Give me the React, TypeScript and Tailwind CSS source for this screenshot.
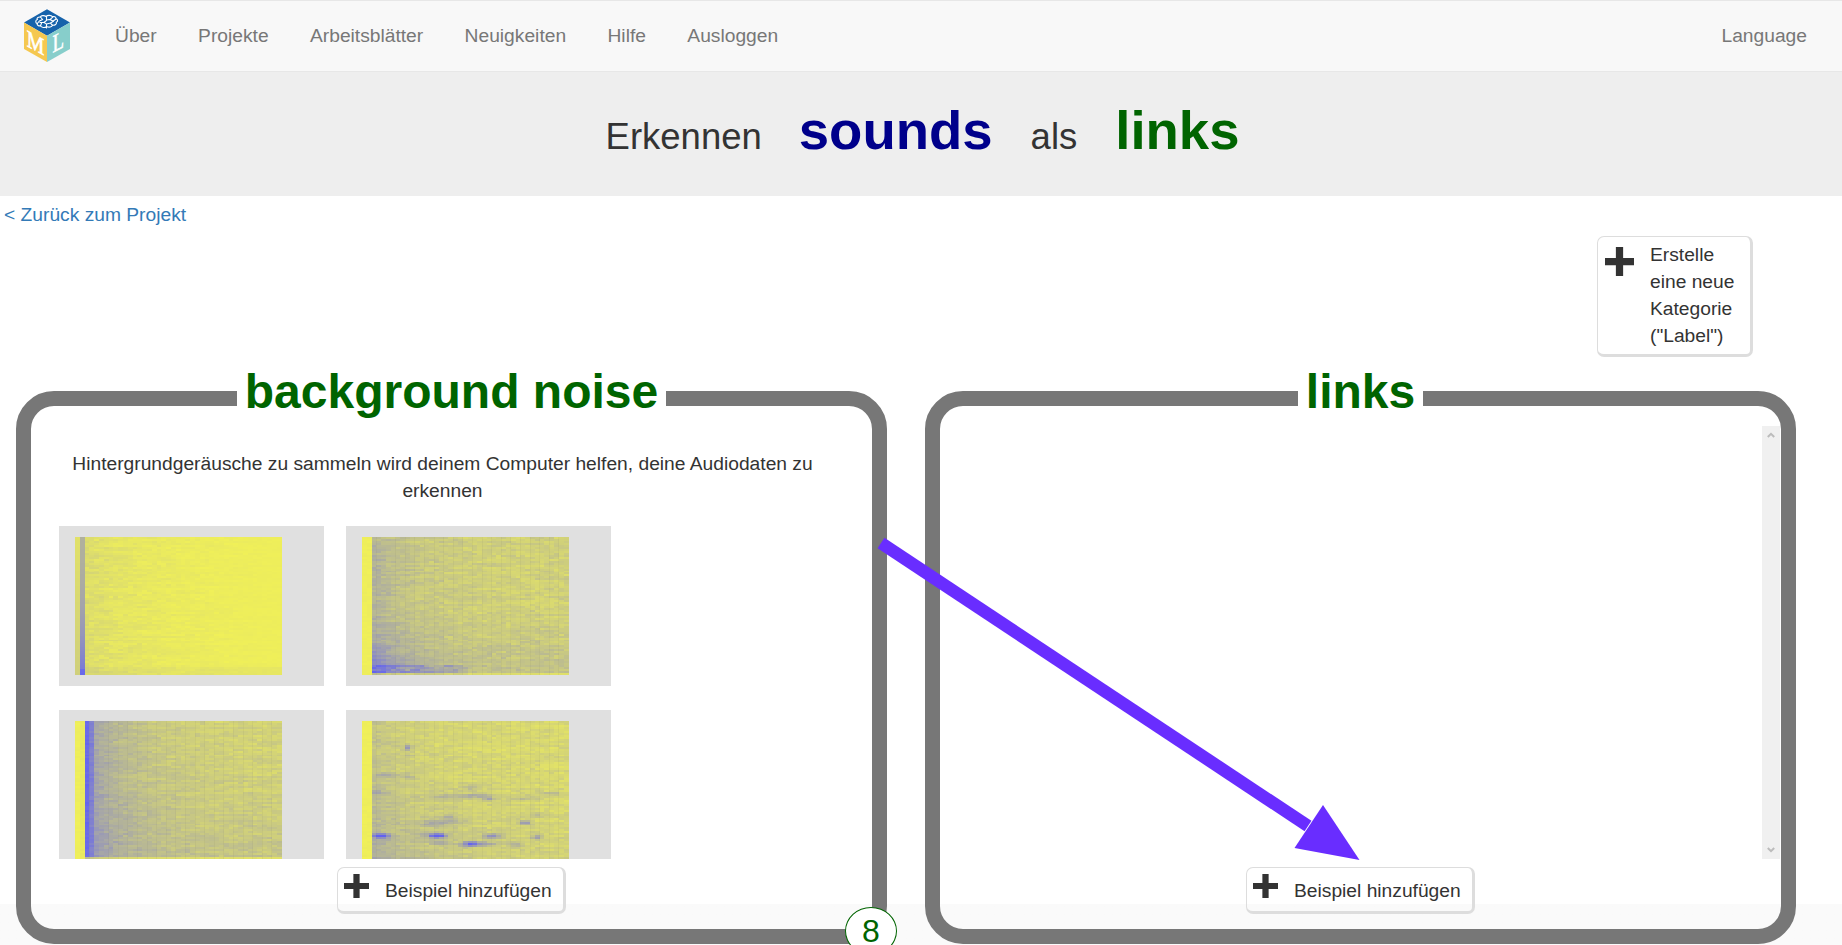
import React, { useMemo } from 'react';

type Kind = 'quiet' | 'fade' | 'burst' | 'tones';

const COLS = 43;
const ROWS = 70;

function random(seed: number) {
  let s = seed;
  return () => {
    s = (s * 1664525 + 1013904223) >>> 0;
    return s / 4294967296;
  };
}

// Streaks of energy: centre column, row, half length, strength
const tones: number[][] = [
  [3.5, 58, 1.4, 0.7], [15.2, 58, 1.1, 0.6], [14.5, 57.5, 3, 0.3], [22, 62, 1.4, 0.7], [25, 62, 2, 0.3],
  [26.5, 58, 1.6, 0.5], [33.5, 51, 1, 0.45], [17, 38, 3, 0.25], [23, 37.5, 2.5, 0.3], [26, 39, 1, 0.3],
  [9, 13, 0.6, 0.4], [14, 52, 3, 0.25], [17, 50, 3, 0.25], [36, 58.5, 0.8, 0.4], [31.5, 62.5, 1.2, 0.3],
  [22, 33, 1.6, 0.25], [36, 47, 1, 0.2], [3, 36, 2, 0.2], [5, 27, 2, 0.2], [39, 36.5, 2.5, 0.18],
  [33, 39, 3, 0.15], [18, 48, 1.5, 0.2], [9.5, 28, 0.8, 0.2], [9, 17, 0.8, 0.15], [16, 61.5, 1.5, 0.2],
];

function level(kind: Kind, c: number, y: number, streak: number, noise: number) {
  const x = c / COLS;
  const n = (streak - 0.5) * 0.8 + (noise - 0.5) * 0.6;
  if (kind === 'quiet') {
    if (c === 0) return 0.12 + y * 0.12;
    if (c === 1) return 0.46 + Math.pow(y, 2.2) * 0.4 + (y > 0.97 ? 0.1 : 0);
    return Math.max(0, 0.15 * Math.exp(-x * 3) + 0.02 + n * 0.1 * (1.1 - x) + (y > 0.95 ? 0.05 : 0));
  }
  if (c < 2) return 0.01 + noise * 0.03 + (kind === 'burst' && c === 1 ? 0.04 : 0);
  if (kind === 'fade') {
    const low = Math.max(0, y - 0.55) / 0.45;
    return 0.23 + 0.27 * Math.exp(-x * 5) + low * low * 0.36 * Math.exp(-x * 7) + low * 0.1 + n * 0.14
      + (y > 0.93 && c < 22 ? 0.16 * (0.4 + streak) : 0);
  }
  if (kind === 'burst') {
    if (c === 2) return 0.98 - noise * 0.07;
    if (c === 3) return 0.84 - noise * 0.1;
    return 0.21 + 0.32 * Math.exp(-(x - 0.08) * 4.5) + y * y * 0.1 + n * 0.13;
  }
  return 0.18 + 0.17 * Math.exp(-x * 5) + y * y * 0.2 * Math.exp(-x * 1.6) + n * 0.13;
}

function Spectrogram({ kind, seed }: { kind: Kind; seed: number }) {
  const cells = useMemo(() => {
    const rnd = random(seed);
    const out: React.ReactElement[] = [];
    for (let r = 0; r < ROWS; r++) {
      let streak = rnd();
      for (let c = 0; c < COLS; c++) {
        if (rnd() < 0.4) streak = rnd();
        let t = level(kind, c, r / (ROWS - 1), streak, rnd());
        if (kind === 'tones' && c > 1) {
          for (const [tc, tr, len, strength] of tones) {
            const dx = (c - tc) / len;
            const dy = (r - tr) / 0.9;
            t += strength * Math.exp(-(dx * dx) / 1.4 - dy * dy * 0.6);
          }
        }
        if (kind !== 'quiet' && kind !== 'tones' && r === ROWS - 1 && c > 1) t *= 0.4;
        t = Math.max(0, Math.min(1, t));
        const rg = Math.round(242 - 144 * t);
        const b = Math.round(86 + 154 * t);
        out.push(<rect key={r * COLS + c} x={c} y={r} width={1.03} height={1.03} fill={`rgb(${rg},${rg},${b})`} />);
      }
    }
    return out;
  }, [kind, seed]);
  return (
    <svg className="block h-[138px] w-[206.5px]" viewBox={`0 0 ${COLS} ${ROWS}`} preserveAspectRatio="none" shapeRendering="crispEdges">
      {cells}
      {kind !== 'quiet' && Array.from({ length: 20 }, (_, i) => (
        <rect key={`l${i}`} x={i * 2 + 2.9} y={0} width={0.2} height={ROWS} fill="#777755" opacity={0.08} />
      ))}
    </svg>
  );
}

function Logo() {
  return (
    <svg className="block h-[54px] w-[48px]" viewBox="0 0 48 54">
      <path d="M24 .3 47 13.5 24 26.8 1 13.5z" fill="#1763ab" />
      <path d="M1 13.5 24 26.8V53L1 40z" fill="#f5c850" />
      <path d="M47 13.5 24 26.8V53L47 40z" fill="#87cecb" />
      <g fill="none" stroke="#fff" strokeWidth="1.1" strokeLinecap="round">
        <path d="M23 7.5c-2-1.6-5-.8-5.5.5-2.5-.3-4 1.3-3.2 2.600-2.200.8-1.800 3.400-.2 3.900-.2 1.800 1.800 2.700 3.300 2.300 1.200 2 4.600 2.300 6.200.7 2.300 1.300 5.300.5 5.800-1.200 2.800.2 4.600-1.300 3.900-3 2-1 1.500-3-.3-3.600.1-1.700-2-2.600-3.600-2-1.200-1.600-4.800-1.800-6.400-.2z" />
        <path d="M23.5 7.5v4l-2.500 2 2.500 1.500v4M17.500 8l2 2.500-3 1.500-2.200 2.500M17.500 16.800l1-2.500M21 13.500h-4M30 7.800l-3 2.700 3 1.500 3.200-2M26.500 10.500l-3 .5M29.600 16.300l-2.200-2.300-3.800 1M27.500 14l3-1.800" />
      </g>
      <text transform="matrix(1 .54 0 1 3.8 37)" fontFamily="Liberation Serif, serif" fontSize="24" textLength="17.5" lengthAdjust="spacingAndGlyphs" fill="#fff" stroke="#fff" strokeWidth=".7">M</text>
      <text transform="matrix(1 -.52 0 1 29.6 43.8)" fontFamily="Liberation Serif, serif" fontSize="25" textLength="11.5" lengthAdjust="spacingAndGlyphs" fill="#fff" stroke="#fff" strokeWidth=".6">L</text>
    </svg>
  );
}

function Plus({ className }: { className: string }) {
  return (
    <svg className={className} viewBox="0 0 28 28" preserveAspectRatio="none">
      <path d="M10.5 0h7v10.500H28v7H17.500V28h-7V17.500H0v-7h10.500z" fill="#333" />
    </svg>
  );
}

function AddExample() {
  return (
    <button className="mt-2 flex h-[47px] w-[229px] items-start rounded-[7px] border border-r-[3px] border-b-[3px] border-[#ddd] pl-1.5 text-left">
      <Plus className="mt-1.5 h-6 w-[25px] shrink-0" />
      <span className="ml-4 mt-[9px] whitespace-nowrap">Beispiel hinzufügen</span>
    </button>
  );
}

function Card({ kind, seed }: { kind: Kind; seed: number }) {
  return (
    <div className="h-40 w-[264.5px] bg-[#e0e0e0] pl-4 pt-[11px]">
      <Spectrogram kind={kind} seed={seed} />
    </div>
  );
}

function Title({ children }: { children: React.ReactNode }) {
  return (
    <h2 className="relative -mt-[41px] h-[54px] bg-white px-[7.5px] text-[48px] font-bold leading-[54px] text-[#006400]">
      {children}
    </h2>
  );
}

const menu = ['Über', 'Projekte', 'Arbeitsblätter', 'Neuigkeiten', 'Hilfe', 'Ausloggen'];

export default function App() {
  return (
    <div className="relative flex h-[945px] w-[1842px] flex-col overflow-hidden bg-white font-['Liberation_Sans',Arial,sans-serif] text-[19.23px] leading-[27px] text-[#333]">
      <nav className="flex h-[72px] shrink-0 items-center border-y border-[#e7e7e7] bg-[#f8f8f8] pl-[23px] pr-[35px] text-[#777]">
        <Logo />
        <ul className="mb-0.5 ml-11 flex gap-[41.4px]">
          {menu.map((m) => <li key={m}>{m}</li>)}
        </ul>
        <span className="mb-0.5 ml-auto">Language</span>
      </nav>
      <header className="flex h-[124px] shrink-0 items-baseline justify-center bg-[#eee] pl-[3px] text-[36.5px] leading-[117px]">
        <span>Erkennen</span>
        <strong className="ml-[37px] text-[54.5px] text-[#00008b]">sounds</strong>
        <span className="ml-[38px]">als</span>
        <strong className="ml-[38px] text-[54.5px] text-[#006400]">links</strong>
      </header>
      <div className="flex h-10 shrink-0 items-center pb-[3px] pl-1 text-[#337ab7]">&lt; Zurück zum Projekt</div>
      <div className="flex h-[155px] shrink-0 justify-end pr-[89px]">
        <button className="flex h-[121px] w-[156px] rounded-[7px] border border-r-[3px] border-b-[3px] border-[#ddd] pl-[7px] pt-[5px] text-left">
          <Plus className="mt-[5px] size-[29px] shrink-0" />
          <span className="-mt-px ml-4 w-[90px]">Erstelle eine neue Kategorie ("Label")</span>
        </button>
      </div>
      <main className="flex h-[554px] shrink-0 gap-[38px] bg-linear-to-b from-white from-[513px] to-[#fafafa] to-[513px] pl-4">
        <section className="relative flex h-[553px] w-[871px] flex-col items-center rounded-[38px] border-[15px] border-[#777]">
          <Title>background noise</Title>
          <p className="mt-[31px] w-[770px] pr-[18px] text-center">
            Hintergrundgeräusche zu sammeln wird deinem Computer helfen, deine Audiodaten zu erkennen
          </p>
          <div className="mt-[22px] flex h-[333px] shrink-0 flex-wrap content-start gap-x-[22.5px] gap-y-6 self-start overflow-hidden pl-7">
            <Card kind="quiet" seed={11} />
            <Card kind="fade" seed={22} />
            <Card kind="burst" seed={33} />
            <Card kind="tones" seed={44} />
          </div>
          <AddExample />
          <span className="absolute -bottom-[26px] -right-[25px] flex h-[48px] w-[52px] items-center justify-center rounded-[50%] border border-[#006400] bg-white text-[32px] leading-[32px] text-[#006400]">8</span>
        </section>
        <section className="flex h-[553px] w-[871px] flex-col items-center rounded-[38px] border-[15px] border-[#777]">
          <Title>links</Title>
          <div className="mr-px mt-[7px] flex h-[433px] w-[18px] shrink-0 flex-col items-center justify-between self-end bg-[#f0f0f0] py-1.5">
            <svg className="h-[7px] w-[8px]" viewBox="0 0 8 7"><path d="M.8 5 4 1.800 7.200 5" fill="none" stroke="#bcbcbc" strokeWidth="2" /></svg>
            <svg className="h-[7px] w-[8px]" viewBox="0 0 8 7"><path d="M.8 2 4 5.200 7.200 2" fill="none" stroke="#bcbcbc" strokeWidth="2" /></svg>
          </div>
          <AddExample />
        </section>
      </main>
      <svg className="pointer-events-none absolute left-0 top-0 h-[945px] w-[1842px]" viewBox="0 0 1842 945">
        <path d="M881 543 1308 826" stroke="#692dff" strokeWidth="12.5" />
        <path d="M1323 805 1359.500 860 1294.500 848z" fill="#692dff" />
      </svg>
    </div>
  );
}
